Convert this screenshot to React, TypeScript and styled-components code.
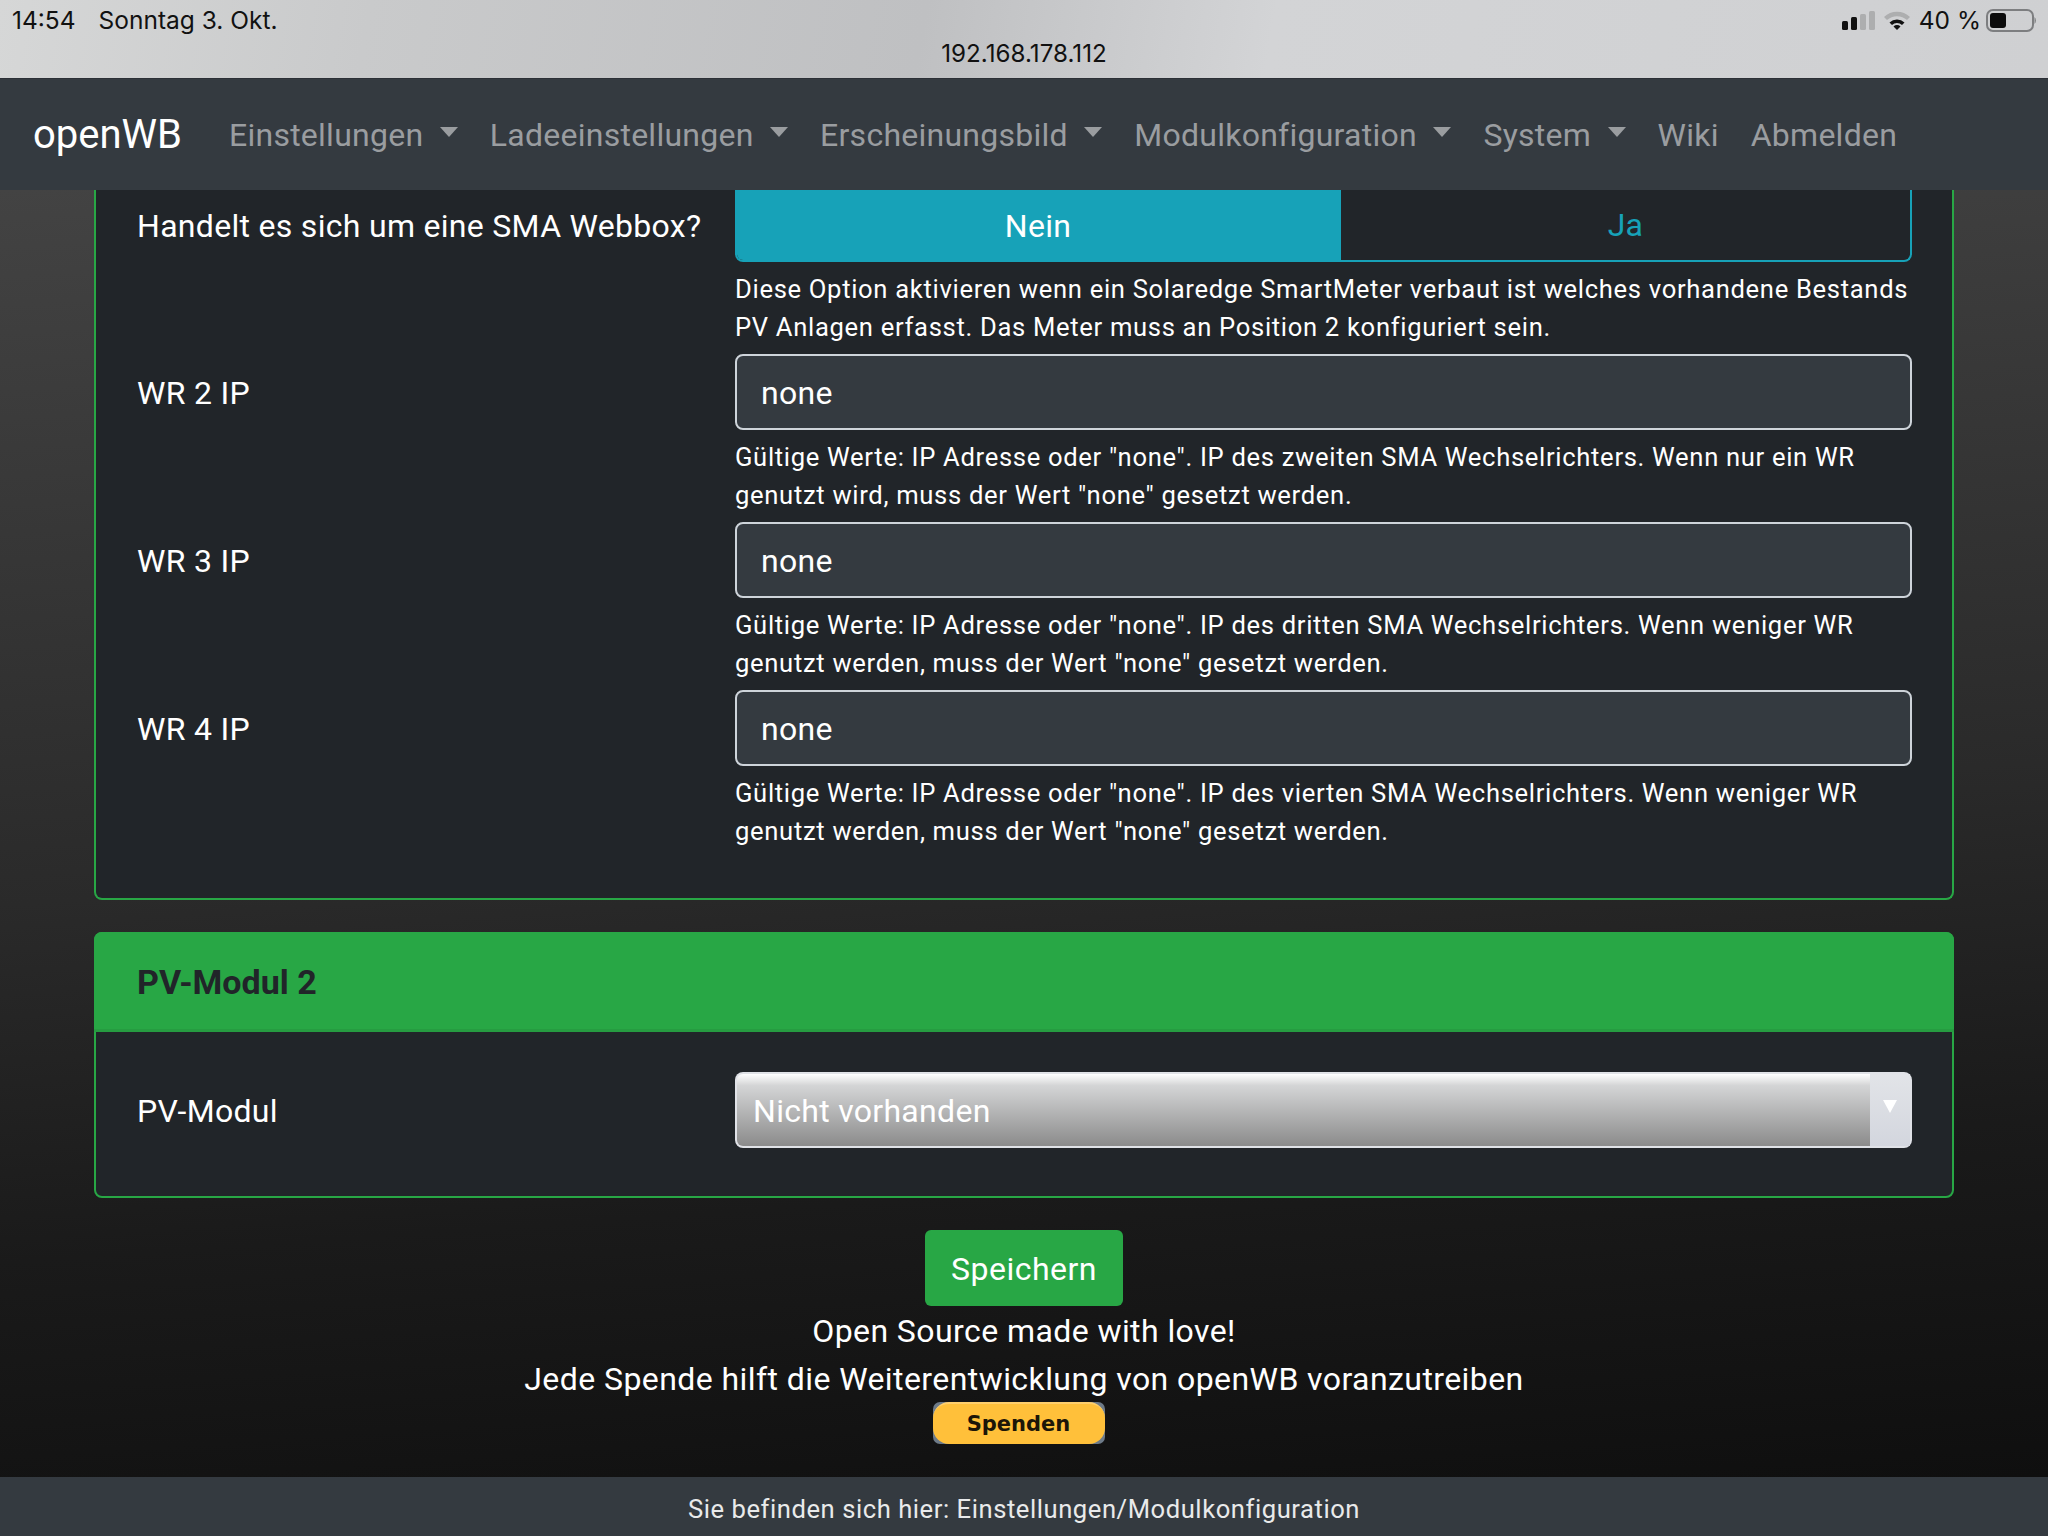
import React from 'react'
import styled, { createGlobalStyle } from 'styled-components'

const GlobalStyle = createGlobalStyle`
  html, body {
    margin: 0;
    padding: 0;
    background: #111;
  }
  * {
    box-sizing: border-box;
  }
`

const Page = styled.div`
  width: 2048px;
  height: 1536px;
  display: flex;
  flex-direction: column;
  overflow: hidden;
  font-family: Roboto, 'Liberation Sans', sans-serif;
  font-size: 32px;
  line-height: 48px;
  letter-spacing: 0.3px;
  color: #fff;
`

const StatusBar = styled.div`
  position: relative;
  flex: 0 0 79px;
  height: 79px;
  background: linear-gradient(100deg, #d6d7d7 0%, #c9cacb 18%, #bfc0c2 45%, #d3d4d6 62%, #cfd0d2 100%);
  border-bottom: 1px solid #2c3036;
  color: #111;
  font-family: Inter, Roboto, sans-serif;
  font-size: 24.5px;
  line-height: 28px;
  letter-spacing: 0;
  display: flex;
  justify-content: space-between;
  padding: 6px 11px 0 12px;
`

const StatusGroup = styled.div<{ $gap: number }>`
  display: flex;
  align-items: center;
  height: 28px;
  gap: ${(p) => p.$gap}px;
`

const Url = styled.div`
  position: absolute;
  left: 0;
  right: 0;
  top: 40px;
  text-align: center;
  font-size: 24.2px;
`

const Navbar = styled.nav`
  flex: 0 0 111px;
  background: #343a40;
  display: flex;
  align-items: center;
  padding: 0 16px 0 33px;
`

const Brand = styled.div`
  font-size: 40px;
  letter-spacing: 0;
  color: #fff;
  margin-right: 31px;
`

const NavLink = styled.div`
  display: flex;
  align-items: center;
  padding: 0 16px;
  letter-spacing: 0.25px;
  color: #9a9da0;
  white-space: nowrap;
`

const Caret = styled.span`
  display: inline-block;
  margin-left: 16.5px;
  margin-top: -6px;
  border-top: 10px solid #9a9da0;
  border-left: 9.6px solid transparent;
  border-right: 9.6px solid transparent;
`

const Main = styled.main`
  flex: 1;
  min-height: 0;
  overflow: hidden;
  padding: 0 94px;
  background: linear-gradient(176deg, #434343 0%, #2a2a2a 50%, #1a1a1a 75%, #0f0f0f 100%);
`

const Card = styled.section<{ $open?: boolean }>`
  background: #212529;
  border: 2px solid #28a745;
  border-top-width: ${(p) => (p.$open ? 0 : 2)}px;
  border-radius: ${(p) => (p.$open ? '0 0 8px 8px' : '8px')};
  margin-bottom: 32px;
`

const CardHeader = styled.h2`
  margin: -2px -2px 0;
  height: 100px;
  padding: 2px 43px 0;
  display: flex;
  align-items: center;
  background: #28a745;
  border-bottom: 3px solid #269c41;
  border-radius: 8px 8px 0 0;
  color: #212529;
  font-size: 34px;
  font-weight: 700;
  letter-spacing: 0;
`

const CardBody = styled.div<{ $top: number }>`
  padding: ${(p) => p.$top}px 41px 40px;
`

const Row = styled.div`
  display: grid;
  grid-template-columns: 598px 1177px;
  margin-bottom: 8px;
`

const Label = styled.div<{ $height: number; $nudge: number }>`
  display: flex;
  align-items: center;
  height: ${(p) => p.$height}px;
  padding-top: ${(p) => p.$nudge}px;
`

const Toggle = styled.div`
  display: flex;
  height: 72px;
  border: 2px solid #17a2b8;
  border-top: 0;
  border-radius: 0 0 8px 8px;
  overflow: hidden;
`

const ToggleOption = styled.div<{ $active?: boolean }>`
  flex: ${(p) => (p.$active ? '0 0 606px' : 1)};
  display: flex;
  align-items: center;
  justify-content: center;
  margin: ${(p) => (p.$active ? '0 0 -2px -2px' : 0)};
  background: ${(p) => (p.$active ? '#17a2b8' : 'transparent')};
  color: ${(p) => (p.$active ? '#fff' : '#17a2b8')};
`

const Input = styled.div`
  height: 76px;
  display: flex;
  align-items: center;
  padding: 2px 24px 0;
  background: #343a40;
  border: 2px solid #ced4da;
  border-radius: 8px;
`

const Help = styled.small`
  display: block;
  margin-top: 8px;
  font-size: 25.6px;
  line-height: 38px;
  letter-spacing: 0.68px;
`

const Select = styled.div`
  height: 76px;
  display: flex;
  background: #e0e2e7;
  border-radius: 8px;
  overflow: hidden;
  padding: 2px;
`

const SelectValue = styled.div`
  flex: 1;
  display: flex;
  align-items: center;
  padding: 2px 0 0 16px;
  background: linear-gradient(#ffffff 0%, #d4d5d6 16%, #8b8b8b 100%);
  border-radius: 6px 0 0 6px;
  color: #fff;
`

const SelectArrow = styled.div`
  flex: 0 0 40px;
  display: flex;
  justify-content: center;
  padding-top: 26px;
  background: linear-gradient(#e2e4e8, #d3d6de);
  &::after {
    content: '';
    width: 0;
    height: 0;
    border-top: 13px solid #fff;
    border-left: 7px solid transparent;
    border-right: 7px solid transparent;
  }
`

const Actions = styled.div`
  text-align: center;
  letter-spacing: 0.42px;
`

const SaveButton = styled.button`
  display: block;
  margin: 0 auto;
  width: 198px;
  height: 76px;
  padding: 1px 0 0;
  border: 0;
  border-radius: 6px;
  background: #28a745;
  color: #fff;
  font: inherit;
  letter-spacing: 0.5px;
`

const Line = styled.div`
  height: 48px;
  padding-top: 1px;
`

const DonateFrame = styled.div`
  margin: 0 0 0 839px;
  width: 172px;
  height: 42px;
  background: #6d7a88;
  border-radius: 7px;
`

const DonateButton = styled.div`
  height: 100%;
  display: flex;
  align-items: center;
  justify-content: center;
  padding-right: 1px;
  background: #ffc03a;
  border-top: 2px solid #ffcf6c;
  border-radius: 16px;
  color: #1c1608;
  font-family: 'DejaVu Sans', sans-serif;
  font-size: 21px;
  font-weight: 700;
  letter-spacing: 0;
  line-height: 38px;
`

const Footer = styled.footer`
  flex: 0 0 59px;
  background: #343a40;
  display: flex;
  align-items: center;
  justify-content: center;
  padding-top: 5px;
  color: #e9eaeb;
  font-size: 25.6px;
  letter-spacing: 0.55px;
`

const SignalIcon = () => (
  <svg width="33" height="19" viewBox="0 0 33 19">
    <rect x="0" y="10" width="6" height="9" rx="1.5" fill="#111" />
    <rect x="9" y="6" width="6" height="13" rx="1.5" fill="#111" />
    <rect x="18" y="3" width="6" height="16" rx="1.5" fill="#adaeaf" />
    <rect x="27" y="0" width="6" height="19" rx="1.5" fill="#adaeaf" />
  </svg>
)

const WifiIcon = () => (
  <svg width="28" height="20" viewBox="0 0 28 20">
    <path d="M1 7 A19 19 0 0 1 27 7 L24 10 A15 15 0 0 0 4 10 Z" fill="#adaeaf" />
    <path d="M6.5 12.5 A11 11 0 0 1 21.5 12.5 L19 15 A7.5 7.5 0 0 0 9 15 Z" fill="#111" />
    <path d="M14 20 L10.5 16.5 A5 5 0 0 1 17.5 16.5 Z" fill="#111" />
  </svg>
)

const BatteryIcon = () => (
  <svg width="51" height="23" viewBox="0 0 51 23">
    <rect x="1" y="1" width="46" height="21" rx="6" fill="none" stroke="#7d7e80" strokeWidth="2" />
    <rect x="4" y="4" width="16" height="15" rx="3" fill="#0c0c0c" />
    <path d="M48.5 8 A5 5 0 0 1 48.5 15 Z" fill="#7d7e80" />
  </svg>
)

const inverters = [
  {
    name: 'WR 2 IP',
    help: 'Gültige Werte: IP Adresse oder "none". IP des zweiten SMA Wechselrichters. Wenn nur ein WR genutzt wird, muss der Wert "none" gesetzt werden.',
  },
  {
    name: 'WR 3 IP',
    help: 'Gültige Werte: IP Adresse oder "none". IP des dritten SMA Wechselrichters. Wenn weniger WR genutzt werden, muss der Wert "none" gesetzt werden.',
  },
  {
    name: 'WR 4 IP',
    help: 'Gültige Werte: IP Adresse oder "none". IP des vierten SMA Wechselrichters. Wenn weniger WR genutzt werden, muss der Wert "none" gesetzt werden.',
  },
]

const navItems = [
  { label: 'Einstellungen', menu: true },
  { label: 'Ladeeinstellungen', menu: true },
  { label: 'Erscheinungsbild', menu: true },
  { label: 'Modulkonfiguration', menu: true },
  { label: 'System', menu: true },
  { label: 'Wiki' },
  { label: 'Abmelden' },
]

export default function App() {
  return (
    <Page>
      <GlobalStyle />
      <StatusBar>
        <StatusGroup $gap={23}>
          <span>14:54</span>
          <span>Sonntag 3. Okt.</span>
        </StatusGroup>
        <StatusGroup $gap={5}>
          <StatusGroup $gap={8}>
            <SignalIcon />
            <WifiIcon />
            <span>40 %</span>
          </StatusGroup>
          <BatteryIcon />
        </StatusGroup>
        <Url>192.168.178.112</Url>
      </StatusBar>

      <Navbar>
        <Brand>openWB</Brand>
        {navItems.map((item) => (
          <NavLink key={item.label}>
            {item.label}
            {item.menu && <Caret />}
          </NavLink>
        ))}
      </Navbar>

      <Main>
        <Card $open>
          <CardBody $top={0}>
            <Row>
              <Label $height={71} $nudge={0}>
                Handelt es sich um eine SMA Webbox?
              </Label>
              <div>
                <Toggle>
                  <ToggleOption $active>Nein</ToggleOption>
                  <ToggleOption>Ja</ToggleOption>
                </Toggle>
                <Help>
                  Diese Option aktivieren wenn ein Solaredge SmartMeter verbaut ist welches vorhandene Bestands PV
                  Anlagen erfasst. Das Meter muss an Position 2 konfiguriert sein.
                </Help>
              </div>
            </Row>
            {inverters.map((wr) => (
              <Row key={wr.name}>
                <Label $height={76} $nudge={2}>
                  {wr.name}
                </Label>
                <div>
                  <Input>none</Input>
                  <Help>{wr.help}</Help>
                </div>
              </Row>
            ))}
          </CardBody>
        </Card>

        <Card>
          <CardHeader>PV-Modul 2</CardHeader>
          <CardBody $top={40}>
            <Row>
              <Label $height={76} $nudge={2}>
                PV-Modul
              </Label>
              <Select>
                <SelectValue>Nicht vorhanden</SelectValue>
                <SelectArrow />
              </Select>
            </Row>
          </CardBody>
        </Card>

        <Actions>
          <SaveButton>Speichern</SaveButton>
          <Line>Open Source made with love!</Line>
          <Line>Jede Spende hilft die Weiterentwicklung von openWB voranzutreiben</Line>
          <DonateFrame>
            <DonateButton>Spenden</DonateButton>
          </DonateFrame>
        </Actions>
      </Main>

      <Footer>Sie befinden sich hier: Einstellungen/Modulkonfiguration</Footer>
    </Page>
  )
}
